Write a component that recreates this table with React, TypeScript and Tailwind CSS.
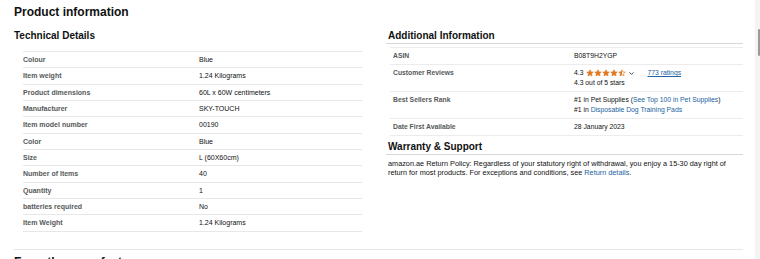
import { ChevronDown } from "lucide-react";

const techDetails = [
  ["Colour", "Blue"],
  ["Item weight", "1.24 Kilograms"],
  ["Product dimensions", "60L x 60W centimeters"],
  ["Manufacturer", "SKY-TOUCH"],
  ["Item model number", "00190"],
  ["Color", "Blue"],
  ["Size", "L (60X60cm)"],
  ["Number of Items", "40"],
  ["Quantity", "1"],
  ["batteries required", "No"],
  ["Item Weight", "1.24 Kilograms"],
];

const Star = ({ fill }: { fill: number }) => (
  <svg width="8" height="8" viewBox="0 0 24 24" className="shrink-0">
    <defs>
      <linearGradient id={`star-${fill}`}>
        <stop offset={`${fill * 100}%`} stopColor="#de7921" />
        <stop offset={`${fill * 100}%`} stopColor="#ffffff" />
      </linearGradient>
    </defs>
    <path
      d="M12 2.5l2.9 6.3 6.9.7-5.2 4.6 1.5 6.8L12 17.4l-6.1 3.5 1.5-6.8-5.2-4.6 6.9-.7z"
      fill={`url(#star-${fill})`}
      stroke="#de7921"
      strokeWidth="2"
      strokeLinejoin="round"
    />
  </svg>
);

const Link = ({ children }: { children: React.ReactNode }) => (
  <span className="text-[#2162a1]">{children}</span>
);

export default function App() {
  return (
    <div className="w-[760px] h-[259px] overflow-hidden bg-white flex font-['Liberation_Sans',Arial,sans-serif] text-[#0f1111]">
      <div className="flex-1 pl-[14px] pr-[12px]">
        <h2 className="text-[12px] font-bold leading-[14px] pt-[4.5px]">
          Product information
        </h2>

        <div className="flex gap-[14px] mt-[11px]">
          {/* left */}
          <div className="w-[358px]">
            <h3 className="text-[10px] font-bold leading-[12px]">Technical Details</h3>
            <div className="ml-[9px] mr-[10px] mt-[9.6px] border-t border-[#e7e7e7]">
              {techDetails.map(([k, v], i) => (
                <div
                  key={i}
                  className="grid grid-cols-[176px_1fr] border-b border-[#e7e7e7] py-[3px] text-[7px] leading-[9.33px]"
                >
                  <span className="font-bold text-[#565959]">{k}</span>
                  <span>{v}</span>
                </div>
              ))}
            </div>
          </div>

          {/* right */}
          <div className="w-[357px]">
            <h3 className="pl-[2px] text-[10px] font-bold leading-[12px] pb-[1.9px] border-b border-[#d5d9d9]">
              Additional Information
            </h3>
            <div className="ml-[4px] mt-[3px] border-t border-[#ececec] text-[6.8px] leading-[9.4px]">
              <div className="grid grid-cols-[184px_1fr] border-b border-[#ececec] py-[3px]">
                <span className="pl-[3px] font-bold text-[#565959]">ASIN</span>
                <span>B08T9H2YGP</span>
              </div>
              <div className="grid grid-cols-[184px_1fr] border-b border-[#ececec] py-[3.4px]">
                <span className="pl-[3px] font-bold text-[#565959]">Customer Reviews</span>
                <div>
                  <div className="flex items-center h-[10px]">
                    <span>4.3</span>
                    <span className="flex items-center ml-[3px]">
                      <Star fill={1} />
                      <Star fill={1} />
                      <Star fill={1} />
                      <Star fill={1} />
                      <Star fill={0.5} />
                    </span>
                    <ChevronDown size={7} strokeWidth={3} className="ml-[2px] text-[#333]" />
                    <span className="ml-[12px] text-[#2162a1] underline">773 ratings</span>
                  </div>
                  <div>4.3 out of 5 stars</div>
                </div>
              </div>
              <div className="grid grid-cols-[184px_1fr] border-b border-[#ececec] py-[3.4px]">
                <span className="pl-[3px] font-bold text-[#565959]">Best Sellers Rank</span>
                <div>
                  <div>
                    #1 in Pet Supplies (<Link>See Top 100 in Pet Supplies</Link>)
                  </div>
                  <div>
                    #1 in <Link>Disposable Dog Training Pads</Link>
                  </div>
                </div>
              </div>
              <div className="grid grid-cols-[184px_1fr] border-b border-[#ececec] py-[3.3px]">
                <span className="pl-[3px] font-bold text-[#565959]">Date First Available</span>
                <span>28 January 2023</span>
              </div>
            </div>

            <h3 className="mt-[5px] pl-[2px] text-[10px] font-bold leading-[12px] pb-[1.9px] border-b border-[#d5d9d9]">
              Warranty &amp; Support
            </h3>
            <p className="mt-[3.5px] pl-[2px] text-[7.3px] leading-[9px]">
              amazon.ae Return Policy: Regardless of your statutory right of withdrawal, you enjoy a 15-30 day right of
              <br />
              return for most products. For exceptions and conditions, see <Link>Return details</Link>.
            </p>
          </div>
        </div>

        <div className="mt-[17px] border-t border-[#e7e7e7]" />
        <h2 className="mt-[5.4px] text-[12px] font-bold leading-[14px]">From the manufacturer</h2>
      </div>

      <div className="w-[5px] bg-[#f4f4f4] flex justify-end">
        <div className="mt-[29px] w-[2px] h-[27px] bg-[#9a9a9a] rounded-full" />
      </div>
    </div>
  );
}
